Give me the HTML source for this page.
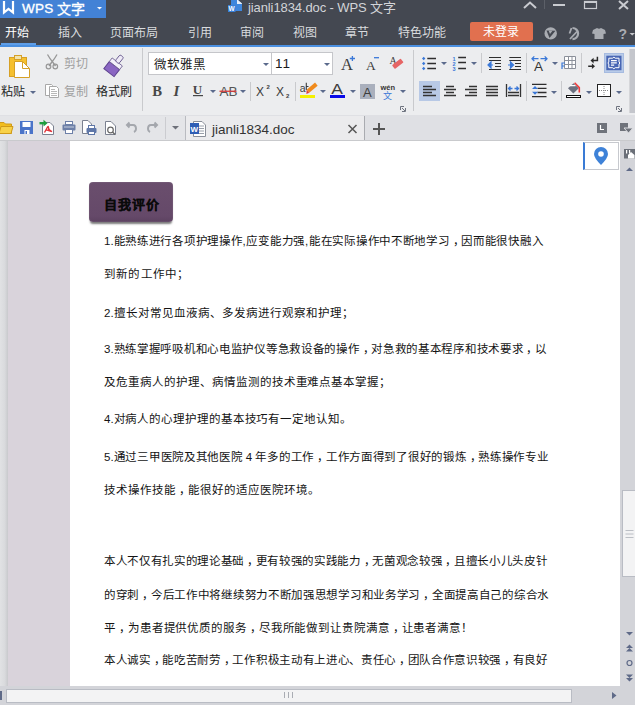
<!DOCTYPE html>
<html lang="zh-CN"><head><meta charset="utf-8">
<style>
*{margin:0;padding:0;box-sizing:border-box}
html,body{width:635px;height:705px;overflow:hidden;background:#e9eaec;font-family:"Liberation Sans",sans-serif;position:relative}
.a{position:absolute}
.t{position:absolute;white-space:nowrap;line-height:1}
svg{position:absolute;overflow:visible}
.tab{color:#d9dbde;font-size:12px;top:27px}
.lbl{font-size:12px;color:#262626}
.gray{color:#a0a0a0}
.sep{position:absolute;width:1px;background:#c9cacd}
.dd{position:absolute;width:0;height:0;border-left:3px solid transparent;border-right:3px solid transparent;border-top:3px solid #5b6a8c}
.ln{position:absolute;left:104px;font-size:11.5px;color:#141414;white-space:nowrap;line-height:14px;letter-spacing:1px}
.c{position:relative;left:3px}
</style></head><body>
<!-- ===== title + tabs ===== -->
<div class="a" style="left:0;top:0;width:635px;height:45px;background:#444851"></div>
<div class="a" style="left:0;top:0;width:106px;height:18px;background:#4382d6"></div>
<div class="a" style="left:0;top:45px;width:635px;height:2px;background:#4a8fe0"></div>
<div class="a" style="left:1px;top:43px;width:35px;height:2px;background:#5e9ee8"></div>
<svg style="left:0;top:0" width="106" height="18">
 <path d="M4 1 V12.5 L8.5 8.8 L13 12.5 V1" fill="none" stroke="#fff" stroke-width="2.2" stroke-linejoin="miter"/>
 <path d="M97 7 L102 7 L99.5 9.5 Z" fill="#fff"/>
</svg>
<div class="t" style="left:22px;top:2px;font-size:13.5px;color:#fff;-webkit-text-stroke:0.35px #fff;letter-spacing:0.3px">WPS</div><div class="t" style="left:56.5px;top:1.5px;font-size:14px;color:#fff;-webkit-text-stroke:0.3px #fff">文字</div>
<svg style="left:226px;top:0" width="18" height="14">
 <path d="M5 0 L12 0 L16 3.5 L16 11 L5 11 Z" fill="#3f86dc"/>
 <path d="M11 0 L12 0 L16 3.5 L16 4 L11 4 Z" fill="#e8eef8"/>
 <rect x="2" y="5" width="7.5" height="7" fill="#3a80d8"/>
 <text x="2.6" y="10.8" font-size="6.5" fill="#fff" font-family="Liberation Sans" font-weight="bold">W</text>
</svg>
<div class="t" style="left:248px;top:1px;font-size:13px;color:#d2d4d8;letter-spacing:-0.1px">jianli1834.doc - WPS 文字</div>
<svg style="left:515px;top:0" width="120" height="18">
 <path d="M9 8 L15 2.5 L21 8" fill="none" stroke="#c9cbd0" stroke-width="2"/>
 <rect x="29" y="0" width="1" height="9" fill="#5c6068"/>
 <rect x="38" y="4" width="12" height="2" fill="#c9cbd0"/>
 <rect x="69.5" y="1.5" width="12" height="7" fill="none" stroke="#c9cbd0" stroke-width="1.2"/>
 <rect x="69" y="1" width="13" height="2" fill="#c9cbd0"/>
 <path d="M104 1 L113 9 M113 1 L104 9" stroke="#c9cbd0" stroke-width="2"/>
</svg>

<div class="t tab" style="left:5px;color:#fff">开始</div>
<div class="t tab" style="left:58px">插入</div>
<div class="t tab" style="left:110px">页面布局</div>
<div class="t tab" style="left:188px">引用</div>
<div class="t tab" style="left:240px">审阅</div>
<div class="t tab" style="left:293px">视图</div>
<div class="t tab" style="left:345px">章节</div>
<div class="t tab" style="left:398px">特色功能</div>
<div class="a" style="left:470px;top:22px;width:63px;height:19px;background:#e1704f;border-radius:2px"></div>
<div class="t" style="left:483px;top:26px;font-size:12px;color:#fff">未登录</div>
<svg style="left:540px;top:20px" width="95" height="25">
 <circle cx="10.7" cy="13.4" r="6.2" fill="#a9acb2"/>
 <path d="M6.5 10.5 L15.5 10.8 L9.5 18 Z" fill="#444851"/>
 <path d="M8.6 10.6 L12.5 10.7 L10 14 Z" fill="#a9acb2"/>
 <path d="M32.5 8 A5.6 5.6 0 1 1 32.5 19.2" fill="none" stroke="#a9acb2" stroke-width="2.2"/>
 <path d="M31.5 8 L29.5 13.5 M30 19 L37 11.5" fill="none" stroke="#a9acb2" stroke-width="1.8"/>
 <path d="M53 10 L57 8 Q59 9.5 61 8 L65 10 L66 13.5 L63.5 14 L63.5 19 L54.5 19 L54.5 14 L52 13.5 Z" fill="#a9acb2"/>
 <text x="78.5" y="18.5" font-size="14" fill="#a9acb2" font-family="Liberation Sans" font-weight="bold">?</text>
 <path d="M89.5 13 L95 13 L92.25 15.5 Z" fill="#c6c8cc"/>
</svg>

<!-- ===== ribbon ===== -->
<div class="a" style="left:0;top:47px;width:635px;height:68px;background:#ecedef"></div>
<div class="a" style="left:0;top:115px;width:635px;height:1px;background:#babcc0"></div>
<div class="a" style="left:630px;top:49px;width:5px;height:64px;background:#c4c6cc"></div>
<div class="sep" style="left:629px;top:49px;height:64px;background:#d5d6d9"></div>

<!-- clipboard -->
<svg style="left:0;top:47px" width="140" height="68">
 <rect x="9.5" y="10.5" width="17" height="19" fill="#f5c02f" stroke="#d6a026"/>
 <rect x="14.5" y="8.5" width="7" height="4" fill="#f2e4ae" stroke="#d6a026"/>
 <path d="M14.5 14.5 L22.5 14.5 L29.5 21.5 L29.5 30.5 L14.5 30.5 Z" fill="#fff" stroke="#d6a026"/>
 <path d="M22.5 14.5 L22.5 21.5 L29.5 21.5" fill="none" stroke="#d6a026"/>
 <!-- scissors -->
 <path d="M47.5 7.5 Q50 12 53 15.5 L55.5 19 M57 7.5 Q54.5 12 51.5 15.5 L49 19" fill="none" stroke="#979797" stroke-width="1.3"/>
 <circle cx="48.5" cy="19.5" r="2.3" fill="none" stroke="#979797" stroke-width="1.2"/>
 <circle cx="55.3" cy="19.5" r="2.3" fill="none" stroke="#979797" stroke-width="1.2"/>
 <!-- copy -->
 <path d="M45.5 37.5 L51.5 37.5 L52.5 38.5 L52.5 48.5 L45.5 48.5 Z" fill="#fff" stroke="#a8a8a8"/>
 <path d="M49.5 39.5 L56.5 39.5 L58.5 41.5 L58.5 50.5 L49.5 50.5 Z" fill="#fff" stroke="#a8a8a8"/>
 <path d="M51 42.5 H55 M51 44.5 H57 M51 46.5 H57 M51 48.5 H57" stroke="#b8b8b8"/>
 <!-- brush -->
 <g transform="translate(114.5,18.5) rotate(38)">
  <rect x="-6.5" y="0" width="13" height="9" fill="#8a66c2" stroke="#5d418f"/>
  <rect x="-6.5" y="-4.5" width="13" height="4.5" fill="#f4f2fa" stroke="#6a5b8f" stroke-width="0.8"/>
  <rect x="-2.3" y="-12" width="4.6" height="8" rx="1.5" fill="#eeeaf6" stroke="#6a5b8f" stroke-width="0.9"/>
 </g>
</svg>
<div class="t lbl" style="left:1px;top:86px">粘贴</div>
<div class="dd" style="left:30px;top:91px"></div>
<div class="t lbl gray" style="left:64px;top:57.5px">剪切</div>
<div class="t lbl gray" style="left:64px;top:86px">复制</div>
<div class="t lbl" style="left:96px;top:86px">格式刷</div>
<div class="sep" style="left:142px;top:48px;height:63px"></div>

<!-- font group -->
<div class="a" style="left:148px;top:52px;width:124px;height:23px;background:#fff;border:1px solid #c5c6ca"></div>
<div class="a" style="left:271px;top:52px;width:62px;height:23px;background:#fff;border:1px solid #c5c6ca"></div>
<div class="t" style="left:154px;top:59px;font-size:12.5px;color:#222">微软雅黑</div>
<div class="t" style="left:275px;top:57px;font-size:13.5px;color:#1a1a1a;letter-spacing:1px">11</div>
<div class="dd" style="left:263px;top:63px"></div>
<div class="dd" style="left:324px;top:63px"></div>

<!-- font group icons -->
<svg style="left:140px;top:47px" width="280" height="68">
 <!-- A+ -->
 <text x="201" y="22.6" font-size="16.5" fill="#3c3c3c" font-family="Liberation Serif">A</text>
 <path d="M209.8 11.5 H215 M212.4 9 V14" stroke="#3a78d8" stroke-width="1.3"/>
 <text x="226" y="22.6" font-size="13.5" fill="#3c3c3c" font-family="Liberation Serif">A</text>
 <path d="M234 10.7 H239" stroke="#3a78d8" stroke-width="1.3"/>
 <!-- clear format -->
 <text x="249.5" y="16.5" font-size="10" fill="#3c3c3c" font-family="Liberation Serif">A</text>
 <g transform="translate(257.8,16.8) rotate(-38)"><rect x="-5.5" y="-2.4" width="11" height="4.8" rx="0.8" fill="#e66565"/></g>
 <!-- B I U -->
 <text x="12.3" y="48.6" font-size="15" fill="#474747" font-family="Liberation Serif" font-weight="bold" transform="translate(12.3,0) scale(0.98,1) translate(-12.3,0)">B</text>
 <text x="33.5" y="48.6" font-size="15" fill="#474747" font-family="Liberation Serif" font-style="italic" font-weight="bold">I</text>
 <text x="52.8" y="46.6" font-size="13" fill="#474747" font-family="Liberation Serif" font-weight="bold">U</text>
 <rect x="53" y="48" width="10" height="1.2" fill="#474747"/>
 <text x="79.5" y="48.5" font-size="13.5" fill="#555" font-family="Liberation Sans">AB</text>
 <rect x="79.5" y="43.6" width="17" height="1.3" fill="#d83b3b"/>
 <!-- X2 -->
 <text x="116" y="48.5" font-size="12" fill="#3c3c3c" font-family="Liberation Sans">X</text>
 <text x="126.5" y="42" font-size="6" fill="#3c3c3c" font-family="Liberation Sans" font-weight="bold">2</text>
 <text x="136" y="48.5" font-size="12" fill="#3c3c3c" font-family="Liberation Sans">X</text>
 <text x="146" y="51" font-size="6" fill="#3c3c3c" font-family="Liberation Sans" font-weight="bold">2</text>
 <!-- highlighter -->
 <text x="159.8" y="44.8" font-size="10.5" fill="#3c3c3c" font-family="Liberation Sans">a</text>
 <path d="M166.3 35.8 V43 M166.3 39.5 H168.5" stroke="#3c3c3c" stroke-width="1.1"/>
 <g transform="translate(171,41.6) rotate(-40)"><rect x="-4" y="-2" width="11" height="4" fill="#f08a1c"/><path d="M-4 -2 L-7 1.2 L-4 2 Z" fill="#e23d3d"/></g>
 <rect x="160" y="48" width="15" height="3" fill="#f4f000"/>
 <!-- font color -->
 <text x="0" y="0" font-size="14" fill="#3c3c3c" font-family="Liberation Sans" transform="translate(191.3,46.5) scale(1.25,1)">A</text>
 <rect x="190" y="48" width="15" height="3" fill="#0a0ae8"/>
 <!-- shaded A -->
 <rect x="220" y="37" width="15" height="15" fill="#aab0bd"/>
 <text x="223" y="49.5" font-size="13" fill="#3c3c3c" font-family="Liberation Sans">A</text>
 <!-- wen -->
 <text x="240.5" y="42.5" font-size="7.5" fill="#333" font-family="Liberation Sans" font-weight="bold">wén</text>
 <text x="243" y="51.5" font-size="9" fill="#3a78d8">文</text>
 <!-- launcher -->
 <path d="M260.5 63 V59.5 H264 M262 61 L265 64 M265.5 61 V64.5 H262" fill="none" stroke="#6f7480" stroke-width="1"/>
</svg>
<div class="dd" style="left:210px;top:90px"></div>
<div class="dd" style="left:240px;top:90px"></div>
<div class="sep" style="left:250px;top:82px;height:19px"></div>
<div class="sep" style="left:295px;top:82px;height:19px"></div>
<div class="dd" style="left:320px;top:90px"></div>
<div class="dd" style="left:350px;top:90px"></div>
<div class="dd" style="left:400px;top:90px"></div>
<div class="sep" style="left:413px;top:50px;height:61px"></div>

<!-- paragraph group -->
<svg style="left:410px;top:47px" width="225" height="68">
 <!-- bullets -->
 <path d="M13.7 9.8 L15.4 11.5 L13.7 13.2 L12 11.5 Z M13.7 14.8 L15.4 16.5 L13.7 18.2 L12 16.5 Z M13.7 19.8 L15.4 21.5 L13.7 23.2 L12 21.5 Z" fill="#3a78d8"/>
 <path d="M17.3 11.5 H26 M17.3 16.5 H26 M17.3 21.5 H26" stroke="#2e2e2e" stroke-width="1.3"/>
 <!-- numbering -->
 <text x="42.5" y="14" font-size="5.5" fill="#3a78d8" font-family="Liberation Sans" font-weight="bold">1</text>
 <text x="42.5" y="19" font-size="5.5" fill="#3a78d8" font-family="Liberation Sans" font-weight="bold">2</text>
 <text x="42.5" y="24.3" font-size="5.5" fill="#3a78d8" font-family="Liberation Sans" font-weight="bold">3</text>
 <path d="M48.2 10.5 H56 M48.2 15.5 H56 M48.2 21.5 H56" stroke="#2e2e2e" stroke-width="1.3"/>
 <!-- decrease indent -->
 <path d="M79 10.5 H91 M79 13.5 H91 M85 16.5 H91 M85 19.5 H91 M79 22.5 H91" stroke="#2e2e2e" stroke-width="1.1"/>
 <path d="M78 18 L81 15 V21 Z M80 18 H83" fill="#3a78d8" stroke="#3a78d8" stroke-width="1.2"/>
 <!-- increase indent -->
 <path d="M99.3 10.5 H111 M99.3 13.5 H111 M105 16.5 H111 M105 19.5 H111 M99.3 22.5 H111" stroke="#2e2e2e" stroke-width="1.1"/>
 <path d="M103.5 18 L100.5 15 V21 Z M98 18 H101" fill="#3a78d8" stroke="#3a78d8" stroke-width="1.2"/>
 <!-- A with arrows -->
 <path d="M122 11.7 H128.5 M124.3 9.4 L122 11.7 L124.3 14 M130.5 11.7 H137 M134.7 9.4 L137 11.7 L134.7 14" fill="none" stroke="#3a78d8" stroke-width="1.3"/>
 <text x="124" y="23.6" font-size="13.5" fill="#333" font-family="Liberation Sans">A</text>
 <!-- table -->
 <path d="M154.5 9.5 H165.5 V21.5 H154.5 Z M158.5 9.5 V21.5 M162 9.5 V21.5 M154.5 13.5 H165.5 M154.5 17.5 H165.5" fill="#fff" stroke="#8b909a"/>
 <path d="M152 22 V16 H155 M152 19 H154.5" fill="none" stroke="#3a78d8" stroke-width="1.2"/>
 <!-- arrows -->
 <path d="M187.4 9.8 V13.6 H182.5 M178.2 19.3 H182.5" fill="none" stroke="#2a2a2a" stroke-width="1.5"/>
 <path d="M180.5 13.6 L183.6 10.8 V16.4 Z M185 19.3 L181.9 16.5 V22.1 Z" fill="#2a2a2a"/>
 <!-- highlighted page -->
 <rect x="194.5" y="6.5" width="19" height="19" fill="#b9cbe8" stroke="#a6bbe0"/>
 <rect x="196.3" y="8.7" width="15.2" height="14.5" fill="#4866b4"/>
 <path d="M198.8 11.2 H202.5 L203.9 10.2 L205.3 11.2 H209 V15 L210 16 L209 17 V20.7 H205.3 L203.9 21.7 L202.5 20.7 H198.8 V17 L197.8 16 L198.8 15 Z" fill="none" stroke="#fff" stroke-width="1"/>
 <path d="M201 13.7 H206.8 M201 15.9 H206.8 M201 18.1 H204.2" stroke="#fff" stroke-width="1.2"/>
 <!-- row 2 : align -->
 <rect x="9" y="34" width="21" height="20" fill="#b8c9e6"/>
 <path d="M13 39.5 H22 M13 42.5 H26 M13 45.5 H22 M13 48.5 H26" stroke="#333" stroke-width="1.5"/>
 <path d="M36 39.5 H44 M34 42.5 H46 M36 45.5 H44 M34 48.5 H46" stroke="#333" stroke-width="1.5"/>
 <path d="M59 39.5 H67 M55 42.5 H67 M59 45.5 H67 M55 48.5 H67" stroke="#333" stroke-width="1.5"/>
 <path d="M76 39.5 H88 M76 42.5 H88 M76 45.5 H88 M76 48.5 H88" stroke="#333" stroke-width="1.5"/>
 <path d="M96.5 37 V50 M110.5 37 V50 M98 45.5 H109 M98 48.5 H109" stroke="#333" stroke-width="1.3"/>
 <path d="M98.5 41.5 H102.5 M100.5 39.5 L98.5 41.5 L100.5 43.5 M104.5 41.5 H108.5 M106.5 39.5 L108.5 41.5 L106.5 43.5" fill="none" stroke="#3a78d8" stroke-width="1.3"/>
 <!-- line spacing -->
 <path d="M122 37.3 H136.5 M127.5 41.3 H136.5 M127.5 45.5 H136.5 M122 49.6 H136.5" stroke="#2e2e2e" stroke-width="1.3"/>
 <path d="M122 42 L125 39 L128 42 Z M122 44.8 L125 47.8 L128 44.8 Z" fill="#3a78d8"/>
 <!-- shading bucket -->
 <path d="M158 41.2 L163.5 36.3 L168.8 41.3 L163.3 46.6 Z" fill="#6b7180"/>
 <path d="M159.8 38.6 H165.5" stroke="#fff" stroke-width="1.3"/>
 <path d="M164.6 35.8 L169.3 40.6 V45.6" fill="none" stroke="#ee3b3b" stroke-width="1.6"/>
 <rect x="156.5" y="48.5" width="14" height="2" fill="#fff" stroke="#111"/>
 <!-- borders -->
 <rect x="187.5" y="37.5" width="13" height="12" fill="#fff" stroke="#222"/>
 <path d="M194 39 V48 M189 43.5 H199" stroke="#888" stroke-dasharray="1 1"/>
 <!-- launcher -->
 <path d="M206.5 63 V59.5 H210 M208 61 L211 64 M211.5 61 V64.5 H208" fill="none" stroke="#6f7480" stroke-width="1"/>
</svg>
<div class="dd" style="left:441px;top:62px"></div>
<div class="dd" style="left:471px;top:62px"></div>
<div class="sep" style="left:481px;top:53px;height:20px"></div>
<div class="sep" style="left:526px;top:53px;height:20px"></div>
<div class="dd" style="left:552px;top:62px"></div>
<div class="sep" style="left:581px;top:53px;height:20px"></div>
<div class="sep" style="left:526px;top:81px;height:20px"></div>
<div class="dd" style="left:551px;top:91px"></div>
<div class="sep" style="left:561px;top:81px;height:20px"></div>
<div class="dd" style="left:586px;top:91px"></div>
<div class="dd" style="left:616px;top:91px"></div>

<!-- ===== quick access + doc tabs ===== -->
<div class="a" style="left:0;top:115px;width:635px;height:26px;background:#dfe0e4"></div>
<div class="a" style="left:0;top:116px;width:185px;height:24px;background:#e4e5e8"></div>
<div class="a" style="left:185px;top:116px;width:180px;height:24px;background:#ebebed;border-left:1px solid #b9bbc0;border-right:1px solid #a9abb0"></div>
<div class="a" style="left:0;top:140px;width:635px;height:1px;background:#c9cacd"></div>
<div class="sep" style="left:165px;top:117px;height:22px;background:#cbccd0"></div>
<svg style="left:0;top:115px" width="635" height="26">
 <!-- folder -->
 <path d="M-1 7.5 H4 L5.5 9 H11.5 V18.5 H-1 Z" fill="#f2bd1d" stroke="#cf9a1a"/>
 <path d="M1 11.5 H13 L11 18.5 H-1 Z" fill="#f8d24a" stroke="#cf9a1a"/>
 <!-- save -->
 <rect x="20" y="6" width="13" height="13" fill="#4a74c9"/>
 <rect x="22.5" y="7" width="8" height="5" fill="#fff"/>
 <rect x="24.5" y="15" width="5" height="4" fill="#fff"/>
 <rect x="25.5" y="16" width="1.5" height="3" fill="#4a74c9"/>
 <!-- pdf -->
 <path d="M42.5 7.5 H50 L53.5 11 V19.5 H42.5 Z" fill="#fff" stroke="#7b8190"/>
 <path d="M44.5 17.5 L47.8 11.5 M46.3 14.8 L52 16.5 M48 11 L49 14.5 L52 16.8" fill="none" stroke="#e0343a" stroke-width="1.4"/>
 <path d="M39.5 8.2 H44" stroke="#1e9d3e" stroke-width="2.4"/><path d="M43.5 4.8 L47.5 8.2 L43.5 11.6 Z" fill="#1e9d3e"/>
 <!-- print -->
 <rect x="65.5" y="6.5" width="7" height="3" fill="#fff" stroke="#6d80a8"/>
 <rect x="62.5" y="9.5" width="13" height="6" rx="1" fill="#6d80a8"/>
 <rect x="64" y="11.5" width="10" height="1" fill="#c8d0e0"/>
 <rect x="65.5" y="14.5" width="7" height="4" fill="#fff" stroke="#6d80a8"/>
 <!-- print preview -->
 <path d="M82.5 5.5 H88 L91.5 9 V18.5 H82.5 Z" fill="#fff" stroke="#7b8190"/>
 <rect x="88.5" y="10.5" width="6" height="3" fill="#fff" stroke="#5f77a8"/>
 <rect x="86.5" y="13" width="10" height="5" rx="1" fill="#5f77a8"/>
 <rect x="88.5" y="16.5" width="6" height="3" fill="#fff" stroke="#5f77a8"/>
 <!-- page preview -->
 <path d="M105.5 6.5 H111 L115.5 11 V19.5 H105.5 Z" fill="#fff" stroke="#7b8190"/>
 <circle cx="110.5" cy="15" r="2.8" fill="#fff" stroke="#666" stroke-width="1.2"/>
 <path d="M112.5 17 L115 19.5" stroke="#666" stroke-width="1.4"/>
 <!-- undo redo -->
 <path d="M127 10 H133 Q136 10 136 14 Q136 16 134 17 M129.5 7.5 L127 10 L129.5 12.5" fill="none" stroke="#a4a7ad" stroke-width="2"/>
 <path d="M157 10 H151 Q148 10 148 14 Q148 16 150 17 M154.5 7.5 L157 10 L154.5 12.5" fill="none" stroke="#a4a7ad" stroke-width="2"/>
 <path d="M172 11 H179 L175.5 14.5 Z" fill="#6d7079"/>
 <!-- doc icon -->
 <path d="M193.5 6.5 H202 L205.5 10 V21.5 H193.5 Z" fill="#fff" stroke="#8a8f99"/>
 <path d="M199 11 H204 M199 13.5 H204 M199 16 H204 M199 18.5 H204" stroke="#9aa0aa"/>
 <rect x="190" y="8" width="9" height="11" fill="#2f5eb5"/>
 <text x="190.5" y="16.5" font-size="8" fill="#fff" font-family="Liberation Sans" font-weight="bold">W</text>
 <!-- close x -->
 <path d="M348.5 10 L356.5 18 M356.5 10 L348.5 18" stroke="#555" stroke-width="1.5"/>
 <!-- plus -->
 <path d="M373 14 H385 M379 8 V20" stroke="#555" stroke-width="2"/>
 <!-- right icons -->
 <rect x="597" y="8" width="10" height="10" fill="#6f737b"/>
 <path d="M600.5 10 V14.5 H604" fill="none" stroke="#fff" stroke-width="1.2"/>
 <rect x="620" y="8" width="8" height="8" fill="#6f737b"/>
 <path d="M624 13 H633 L628.5 18 Z" fill="#6f737b" stroke="#dcdde1" stroke-width="1"/>
</svg>
<div class="t" style="left:212px;top:123px;font-size:13.5px;color:#333">jianli1834.doc</div>

<!-- ===== document area ===== -->
<div class="a" style="left:0;top:141px;width:635px;height:564px;background:#d9d3db"></div>
<div class="a" style="left:0;top:141px;width:8px;height:545px;background:linear-gradient(to right,#e1e2e4,#d9dadd 60%,#c8c9cc)"></div>
<div class="a" style="left:70px;top:141px;width:551px;height:545px;background:#fff"></div>
<!-- location marker -->
<div class="a" style="left:583px;top:142px;width:36px;height:28px;background:#fff;border:1px solid #c7c9ce;border-left:2px solid #3a7bd5"></div>
<svg style="left:583px;top:142px" width="36" height="28">
 <path d="M18 5 A7 7 0 0 1 25 12 Q25 16 18 23 Q11 16 11 12 A7 7 0 0 1 18 5 Z" fill="#3e82d8"/>
 <circle cx="18" cy="12" r="2.8" fill="#fff"/>
</svg>
<!-- vscroll -->
<div class="a" style="left:620px;top:141px;width:15px;height:564px;background:#d3d4d9"></div>
<div class="a" style="left:622px;top:490px;width:13px;height:87px;background:#f3f3f4;border:1px solid #b9bcc4;border-right:none"></div>
<svg style="left:620px;top:141px" width="15" height="564">
 <rect x="4" y="8" width="11" height="9.5" fill="#6b7079"/>
 <rect x="6" y="9" width="1.2" height="3.5" fill="#fff"/>
 <rect x="9" y="9" width="1.2" height="3.5" fill="#fff"/>
 <path d="M8 17.5 V14 L11 11 L14.5 14 V17.5 Z" fill="#fff"/>
 <path d="M6 30 L9.5 26.5 L13 30 Z" fill="#5f6a88"/>
 <path d="M5.5 389.5 H13.5 M5.5 393 H13.5 M5.5 396.5 H13.5" stroke="#b6b9c0" stroke-width="0.9"/>
 <path d="M6 491 L9.5 494.5 L13 491 Z" fill="#5f6a88"/>
 <path d="M6 507 L9.5 503.5 L13 507 Z M6 510.5 L9.5 507 L13 510.5 Z" fill="#5f6a88"/>
 <circle cx="9.5" cy="522" r="2.5" fill="none" stroke="#5f6a88" stroke-width="1.2"/>
 <path d="M6 533.5 L9.5 537 L13 533.5 Z M6 537 L9.5 540.5 L13 537 Z" fill="#5f6a88"/>
</svg>
<!-- hscroll -->
<div class="a" style="left:0;top:686px;width:620px;height:19px;background:#d3d4d9"></div>
<div class="a" style="left:6px;top:689px;width:566px;height:14px;background:#f3f3f4;border:1px solid #b9bcc4"></div>
<svg style="left:0;top:686px" width="635" height="19">
 <path d="M284.5 6 V12 M288.5 6 V12 M292.5 6 V12" stroke="#a9acb3"/>
 <path d="M612 6 L616.5 9.5 L612 13 Z" fill="#5f6a88"/>
 <rect x="0" y="5" width="2" height="9" fill="#5f6a88"/>
</svg>

<!-- ===== doc content ===== -->
<div class="a" style="left:89px;top:182px;width:84px;height:40px;background:linear-gradient(#6a4e6d,#654969 85%,#5c4260);border-radius:4px;box-shadow:0 3px 2px -1px rgba(80,80,80,.75),inset 0 0 0 1px rgba(255,255,255,.06)"></div>
<div class="t" style="left:104px;top:197.5px;font-size:13px;font-weight:bold;color:#0a0a0a;letter-spacing:1.1px;-webkit-text-stroke:0.2px #0a0a0a">自我评价</div>

<div class="ln" style="top:234px;letter-spacing:0.72px"><span style="letter-spacing:0">1.</span>能熟练进行各项护理操作,应变能力强,能在实际操作中不断地学习<span class="c">，</span>因而能很快融入</div>
<div class="ln" style="top:267px;letter-spacing:1.180px">到新的工作中；</div>
<div class="ln" style="top:306px;letter-spacing:1.0px"><span style="letter-spacing:0">2.</span>擅长对常见血液病、多发病进行观察和护理；</div>
<div class="ln" style="top:342px;letter-spacing:0.71px"><span style="letter-spacing:0">3.</span>熟练掌握呼吸机和心电监护仪等急救设备的操作<span class="c">，</span>对急救的基本程序和技术要求<span class="c">，</span>以</div>
<div class="ln" style="top:375px;letter-spacing:0.970px">及危重病人的护理、病情监测的技术重难点基本掌握；</div>
<div class="ln" style="top:412px;letter-spacing:0.905px"><span style="letter-spacing:0">4.</span>对病人的心理护理的基本技巧有一定地认知。</div>
<div class="ln" style="top:450px;letter-spacing:0.728px"><span style="letter-spacing:0">5.</span>通过三甲医院及其他医院<span style="letter-spacing:0"> 4 </span>年多的工作<span class="c">，</span>工作方面得到了很好的锻炼<span class="c">，</span>熟练操作专业</div>
<div class="ln" style="top:483px;letter-spacing:1.000px">技术操作技能<span class="c">，</span>能很好的适应医院环境。</div>
<div class="ln" style="top:554px;letter-spacing:0.670px">本人不仅有扎实的理论基础<span class="c">，</span>更有较强的实践能力<span class="c">，</span>无菌观念较强<span class="c">，</span>且擅长小儿头皮针</div>
<div class="ln" style="top:588px;letter-spacing:0.708px">的穿刺<span class="c">，</span>今后工作中将继续努力不断加强思想学习和业务学习<span class="c">，</span>全面提高自己的综合水</div>
<div class="ln" style="top:621px;letter-spacing:0.900px">平<span class="c">，</span>为患者提供优质的服务<span class="c">，</span>尽我所能做到让贵院满意<span class="c">，</span>让患者满意！</div>
<div class="ln" style="top:653px;letter-spacing:0.676px">本人诚实<span class="c">，</span>能吃苦耐劳<span class="c">，</span>工作积极主动有上进心、责任心<span class="c">，</span>团队合作意识较强<span class="c">，</span>有良好</div>
</body></html>
